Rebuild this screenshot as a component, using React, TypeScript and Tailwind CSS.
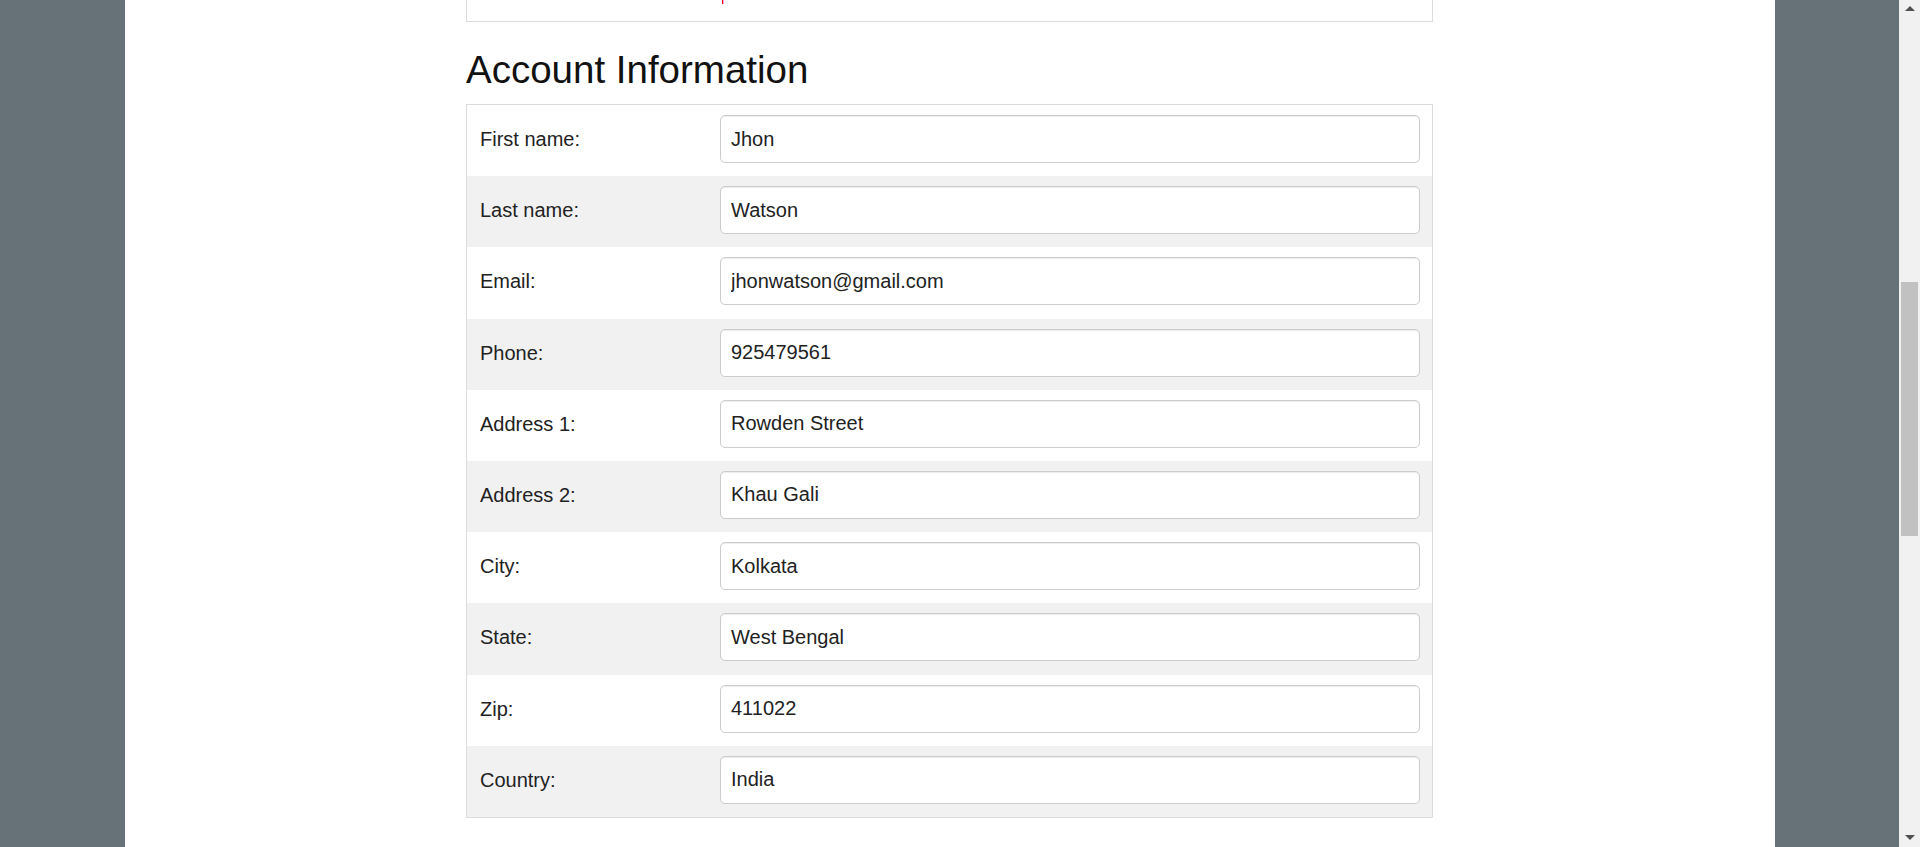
const fields = [
  { label: "First name:", value: "Jhon" },
  { label: "Last name:", value: "Watson" },
  { label: "Email:", value: "jhonwatson@gmail.com" },
  { label: "Phone:", value: "925479561" },
  { label: "Address 1:", value: "Rowden Street" },
  { label: "Address 2:", value: "Khau Gali" },
  { label: "City:", value: "Kolkata" },
  { label: "State:", value: "West Bengal" },
  { label: "Zip:", value: "411022" },
  { label: "Country:", value: "India" },
];

function Scrollbar() {
  return (
    <div className="flex w-[21px] shrink-0 flex-col items-center bg-[#f1f1f1]">
      {/* up arrow */}
      <div className="mt-[6px] h-0 w-0 border-x-[5px] border-b-[5px] border-x-transparent border-b-[#505050]" />
      <div className="mt-[271px] h-[254px] w-[17px] bg-[#c1c1c1]" />
      <div className="flex-1" />
      {/* down arrow */}
      <div className="mb-[7px] h-0 w-0 border-x-[5px] border-t-[5px] border-x-transparent border-t-[#505050]" />
    </div>
  );
}

export default function App() {
  return (
    <div
      className="flex h-[847px] w-full overflow-hidden bg-[#677178]"
      style={{ fontFamily: '"Liberation Sans", Arial, sans-serif' }}
    >
      <div className="w-[125px] shrink-0" />

      <main className="w-[1650px] shrink-0 bg-white pl-[341px]">
        <div className="w-[967px]">
          {/* end of the previous panel, scrolled past */}
          <div className="h-[22px] border-x border-b border-[#dcdcdc]">
            <div className="ml-[255px] flex h-[4px] w-[2px]">
              <div className="w-px bg-[#f00]" />
              <div className="w-px bg-[#ff9ad0]" />
            </div>
          </div>

          <h2 className="mt-[26px] mb-[13px] text-[38.5px] leading-[43px] font-normal text-[#111]">
            Account Information
          </h2>

          <div className="border border-[#dcdcdc]">
            {fields.map((f, i) => (
              <div
                key={f.label}
                className={`grid h-[71.2px] grid-cols-[253px_1fr] items-start ${
                  i % 2 === 1 ? "bg-[#f1f1f1]" : "bg-white"
                }`}
              >
                <label className="pt-[19px] pl-[13px] text-[20px] leading-[30px] text-[#222]">
                  {f.label}
                </label>
                <div className="pt-[10px] pr-[12px]">
                  <input
                    readOnly
                    value={f.value}
                    className="block h-[48px] w-full rounded-[5px] border border-[#cccccc] bg-white px-[10px] text-[20px] text-[#222] shadow-[inset_0_1px_1px_rgba(0,0,0,0.075)] outline-none"
                  />
                </div>
              </div>
            ))}
          </div>
        </div>
      </main>

      <div className="flex-1" />
      <Scrollbar />
    </div>
  );
}
